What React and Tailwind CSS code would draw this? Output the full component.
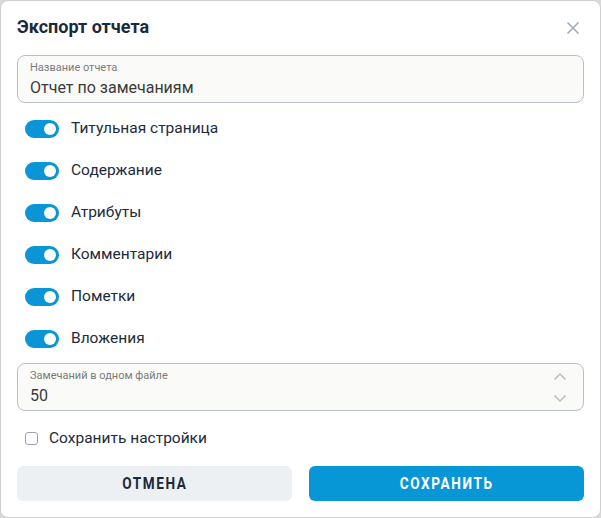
import React, { useState } from 'react';

const options = [
  'Титульная страница',
  'Содержание',
  'Атрибуты',
  'Комментарии',
  'Пометки',
  'Вложения',
];

const Toggle = ({ on, onClick }) => (
  <button
    onClick={onClick}
    className={`relative w-[34px] h-[18px] rounded-full ${on ? 'bg-[#0995d6]' : 'bg-[#c5ccd3]'}`}
  >
    <span
      className={`absolute top-[3px] w-3 h-3 rounded-full bg-white ${on ? 'left-[19px]' : 'left-[3px]'}`}
    />
  </button>
);

const App = () => {
  const [checked, setChecked] = useState(options.map(() => true));
  const [remember, setRemember] = useState(false);

  const flip = (i) => setChecked(checked.map((v, j) => (j === i ? !v : v)));

  return (
    <div className="w-[601px] h-[518px] bg-[#d9d9d9] font-['Roboto',sans-serif]">
      <div className="w-full h-full bg-white rounded-[8px] border border-[#cfcfcf] flex flex-col px-4 pt-[13px]">
        <div className="flex items-center justify-between h-[24px]">
          <h2 className="text-[18px] font-bold text-[#1b2a3a]">Экспорт отчета</h2>
          <svg width="14" height="14" viewBox="0 0 14 14" className="mr-[4px] mt-[4px]">
            <path d="M1.5 1.5 L12.5 12.5 M12.5 1.5 L1.5 12.5" stroke="#a3acb6" strokeWidth="1.6" fill="none" />
          </svg>
        </div>

        <div className="mt-[17px] h-[48px] rounded-[8px] border border-[#b9c0c8] bg-[#fafaf8] px-[12px] pt-[5px]">
          <div className="text-[11px] leading-[14px] text-[#7a7a7a]">Название отчета</div>
          <div className="text-[16px] leading-[22px] text-[#3a3a3a] mt-[2px]">Отчет по замечаниям</div>
        </div>

        <div className="flex flex-col mt-[17px] gap-[24px] pl-[8px]">
          {options.map((label, i) => (
            <div key={label} className="flex items-center h-[18px] gap-[12px]">
              <Toggle on={checked[i]} onClick={() => flip(i)} />
              <span className="text-[15.5px] text-[#1d2b3a]">{label}</span>
            </div>
          ))}
        </div>

        <div className="mt-[15px] h-[48px] rounded-[8px] border border-[#b9c0c8] bg-[#fafaf8] pl-[12px] pr-[16px] pt-[5px] flex justify-between">
          <div>
            <div className="text-[11px] leading-[14px] text-[#7a7a7a]">Замечаний в одном файле</div>
            <div className="text-[16px] leading-[22px] text-[#3a3a3a] mt-[2px]">50</div>
          </div>
          <div className="flex flex-col justify-between pb-[7px] pt-[3px]">
            <svg width="14" height="9" viewBox="0 0 14 9">
              <path d="M1.5 7.5 L7 2 L12.5 7.5" stroke="#b6bec7" strokeWidth="1.5" fill="none" />
            </svg>
            <svg width="14" height="9" viewBox="0 0 14 9">
              <path d="M1.5 1.5 L7 7 L12.5 1.5" stroke="#b6bec7" strokeWidth="1.5" fill="none" />
            </svg>
          </div>
        </div>

        <label className="flex items-center mt-[16px] pl-[8px] gap-[11px] cursor-pointer">
          <input
            type="checkbox"
            checked={remember}
            onChange={() => setRemember(!remember)}
            className="appearance-none w-[13px] h-[13px] rounded-[3px] border border-[#9aa3ad] bg-white checked:bg-[#0995d6]"
          />
          <span className="text-[15.5px] text-[#1d2b3a]">Сохранить настройки</span>
        </label>

        <div className="grid grid-cols-2 gap-[17px] mt-[16px]">
          <button className="h-[35px] rounded-[6px] bg-[#edf0f3] text-[#1b2a3a] flex items-center justify-center">
            <span className="inline-block scale-x-[0.8] text-[17px] font-bold tracking-[2px]">ОТМЕНА</span>
          </button>
          <button className="h-[35px] rounded-[6px] bg-[#0797d7] text-white flex items-center justify-center">
            <span className="inline-block scale-x-[0.8] text-[17px] font-bold tracking-[2px]">СОХРАНИТЬ</span>
          </button>
        </div>
      </div>
    </div>
  );
};

export default App;
